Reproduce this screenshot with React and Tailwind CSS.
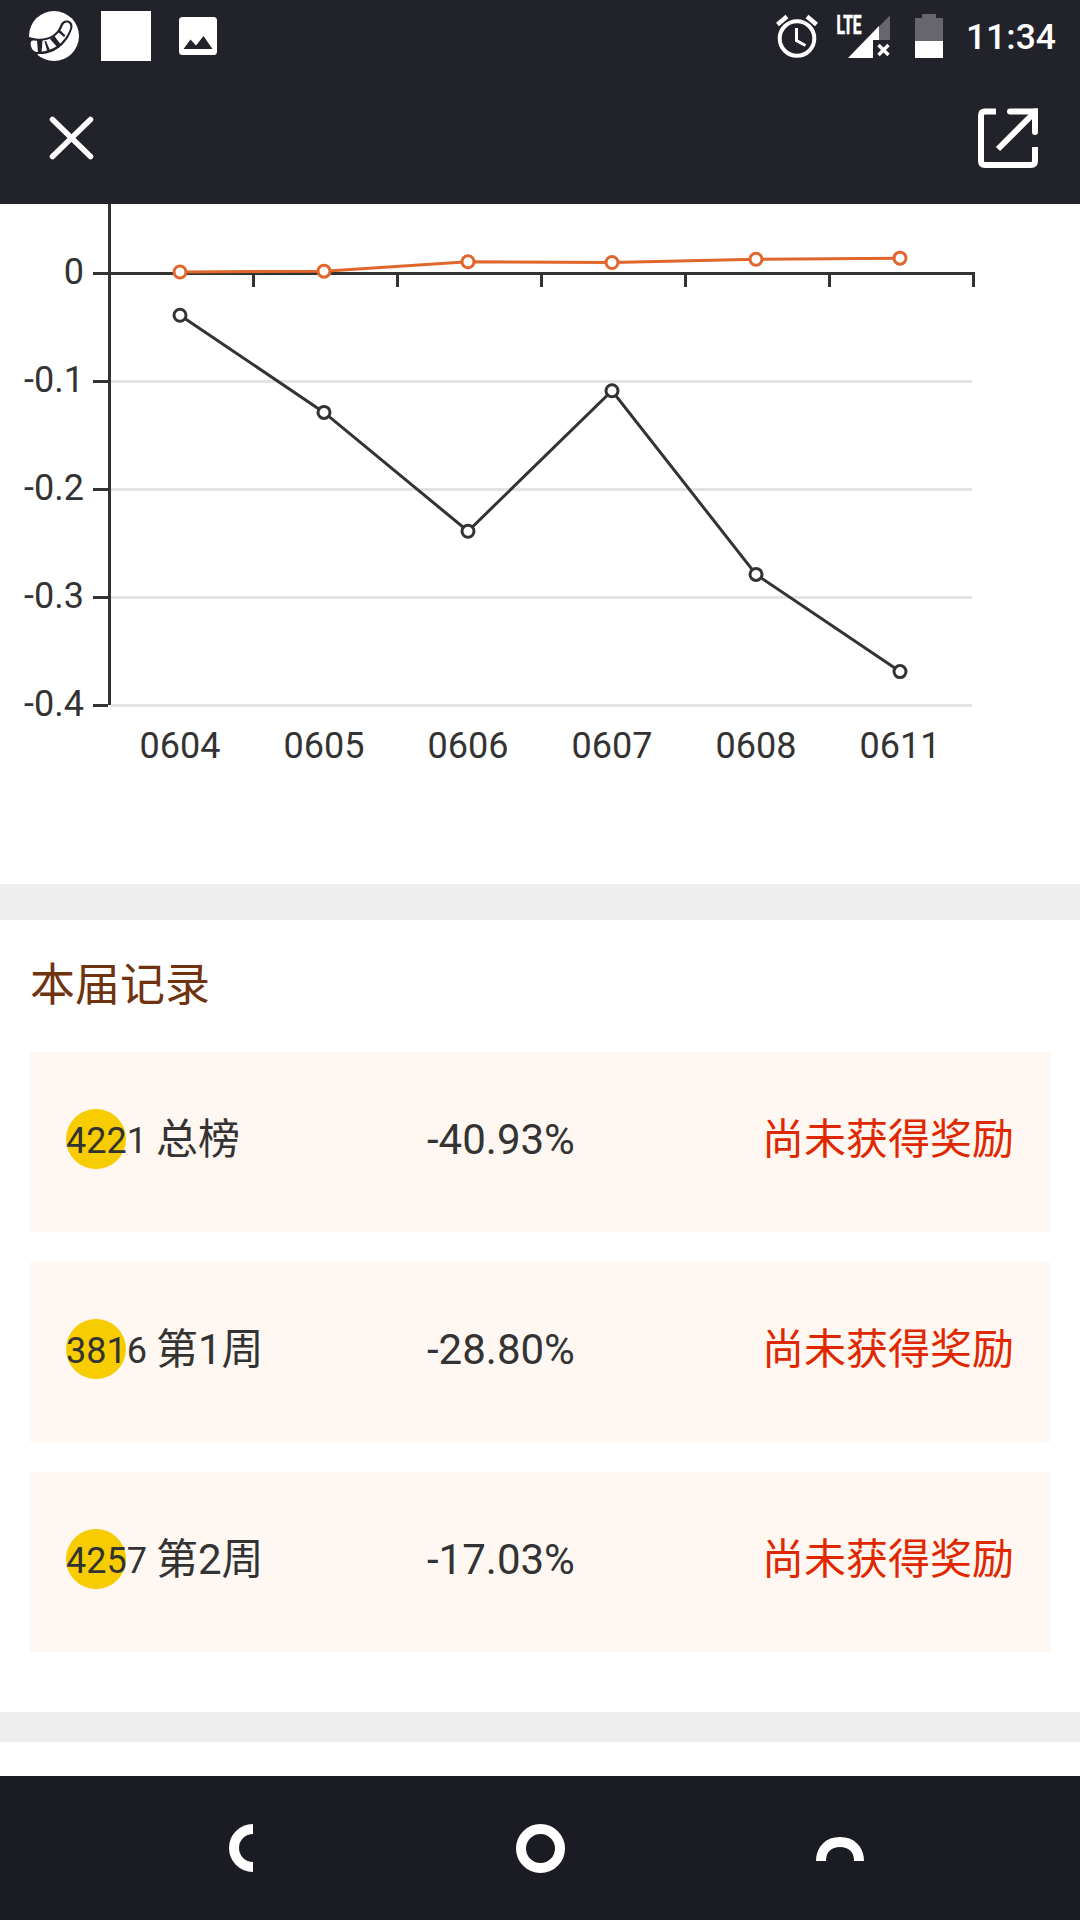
const xLabels = ['0604', '0605', '0606', '0607', '0608', '0611'];
const yLabels = ['0', '-0.1', '-0.2', '-0.3', '-0.4'];

const series = [
  { name: 'mine', color: '#333', values: [-0.04, -0.13, -0.24, -0.11, -0.28, -0.37] },
  { name: 'index', color: '#e0662c', values: [0, 0.0008, 0.0095, 0.0088, 0.0118, 0.0128] },
];

const records = [
  { rank: '4221', name: '总榜', rate: '-40.93%', award: '尚未获得奖励' },
  { rank: '3816', name: '第1周', rate: '-28.80%', award: '尚未获得奖励' },
  { rank: '4257', name: '第2周', rate: '-17.03%', award: '尚未获得奖励' },
];

const STEP_X = 144;
const STEP_Y = 108;
const pointX = (i) => 180 + i * STEP_X;
const pointY = (v) => 68 - v * 10 * STEP_Y;

function StatusBar() {
  return (
    <div className="flex h-[72px] items-center pl-[29px] pr-6">
      <svg width="50" height="50" viewBox="0 0 50 50">
        <circle cx="25" cy="25" r="25" fill="#fff" />
        <path d="M0 26 C16 31 27 25 31 15 C34 6 46 9 43 18 C37 36 22 44 9 43 L7 45 L-1 36 Z" fill="#22222b" />
        <path d="M2 35 C1 31 2 29 5 29.500 C20 31 30 25 33.500 15 C36 9 43 11 41 18 C36 32 24 40 10 41 C5 41 3 39 2 35 Z" fill="#fff" />
        <path d="M8 29 L13.500 29 L12.500 42 L9 42 Z M17 30 L21.500 40.500 L18.500 41 L15.500 30 Z M21 28 L25.500 25 L32 34 L29 37 Z M29 21 L31 19 L36.500 24.500 L35 26 Z" fill="#22222b" />
      </svg>
      <div className="ml-[22px] size-[50px] bg-white" />
      <svg className="ml-7" width="38" height="38" viewBox="0 0 38 38">
        <rect width="38" height="38" rx="3.500" fill="#fff" />
        <path d="M4.500 32 L11.500 22.500 L17 28.500 L24.500 19 L33.500 32 Z" fill="#22222b" />
      </svg>

      <svg className="ml-auto" width="42" height="44" viewBox="0 0 42 44" fill="none" stroke="#fff">
        <circle cx="21" cy="24.500" r="17.300" strokeWidth="4" />
        <path d="M20.500 14 V26.500 L29.500 31.500" strokeWidth="3" />
        <path d="M1.500 10.500 L11 2.500 M40.500 10.500 L31 2.500" strokeWidth="4.500" />
      </svg>
      <svg className="ml-[19px] overflow-visible" width="54" height="44" viewBox="0 0 54 44">
        <text x="-0.500" y="19.500" textLength="25" lengthAdjust="spacingAndGlyphs" className="font-['Roboto'] text-[26px] font-bold" fill="#fff" stroke="#fff" strokeWidth="0.700">LTE</text>
        <path d="M53 1.500 V26 H42 V12.500 Z" fill="#66666c" />
        <path d="M42 12 V26 H36 V44 H11 Z" fill="#fff" />
        <path d="M41.500 31 L51.500 41 M51.500 31 L41.500 41" stroke="#fff" strokeWidth="3.400" />
      </svg>
      <svg className="ml-6" width="28" height="44" viewBox="0 0 28 44">
        <path d="M7 0 H21 V4 H28 V27 H0 V4 H7 Z" fill="#66666c" />
        <path d="M0 27 H28 V44 H0 Z" fill="#fff" />
      </svg>
      <span className="ml-[23px] mt-[3px] text-[35.5px] font-medium leading-none text-white">11:34</span>
    </div>
  );
}

function TitleBar() {
  return (
    <div className="flex h-33 items-center justify-between pl-[49px] pr-[41px]">
      <svg width="45" height="44" viewBox="0 0 45 44" stroke="#fff" strokeWidth="5.500" strokeLinecap="round">
        <path d="M3.500 3.500 L41.500 40.500 M41.500 3.500 L3.500 40.500" />
      </svg>
      <svg width="62" height="62" viewBox="0 0 62 62" fill="none" stroke="#fff" strokeWidth="6">
        <path d="M19 4.500 H8 Q4 4.500 4 8.500 V54 Q4 58 8 58 H54 Q58 58 58 54 V40" />
        <path d="M33 4.500 H58 V25" strokeLinecap="round" />
        <path d="M56 1.500 H61 V8 Z" fill="#fff" stroke="none" />
        <path d="M21 42 L57 6" />
      </svg>
    </div>
  );
}

function TrendChart() {
  return (
    <svg className="block" width="1080" height="680" viewBox="0 0 1080 680">
      {/* grid and y axis */}
      {yLabels.map((label, i) => (
        <g key={label}>
          {i > 0 && <path d={`M111 ${69.5 + i * STEP_Y} H972`} stroke="#e3e3e3" strokeWidth="3" />}
          <path d={`M93 ${69.5 + i * STEP_Y} H108`} stroke="#333" strokeWidth="3" />
          <text x="84" y={79.5 + i * STEP_Y} textAnchor="end" className="text-[36px]" fill="#333">{label}</text>
        </g>
      ))}
      <path d="M109.500 0 V501" stroke="#333" strokeWidth="3" />

      {/* x axis */}
      <path d="M108 69.500 H975" stroke="#333" strokeWidth="3" />
      {xLabels.map((label, i) => (
        <g key={label}>
          <path d={`M${253.5 + i * STEP_X} 69 V83`} stroke="#333" strokeWidth="3" />
          <text x={pointX(i)} y="553.500" textAnchor="middle" className="text-[36px]" fill="#333">{label}</text>
        </g>
      ))}

      {series.map((s) => (
        <g key={s.name} stroke={s.color} strokeWidth="3">
          <polyline points={s.values.map((v, i) => `${pointX(i)},${pointY(v)}`).join(' ')} fill="none" />
          {s.values.map((v, i) => (
            <circle key={i} cx={pointX(i)} cy={pointY(v)} r="6" fill="#fff" />
          ))}
        </g>
      ))}
    </svg>
  );
}

function RecordRow({ record }) {
  return (
    <li className="flex h-45 items-start bg-[#fff7f1] px-9 pt-[57px] text-[42px] leading-[62px] text-[#333]">
      <div className="flex h-[60px] w-[361px] items-start">
        <span className="size-[60px] rounded-full bg-[#f7cc00] text-[36px] leading-[65px]">{record.rank}</span>
        <span className="ml-[30px]">{record.name}</span>
      </div>
      <span>{record.rate}</span>
      <span className="ml-auto text-[#e02800]">{record.award}</span>
    </li>
  );
}

function NavBar() {
  return (
    <nav className="flex h-36 items-center bg-[#1b1b23]">
      <svg className="ml-[229px]" width="24" height="48" viewBox="0 0 24 48" fill="none" stroke="#fff" strokeWidth="10">
        <circle cx="24" cy="24" r="19" />
      </svg>
      <svg className="ml-[263px]" width="49" height="49" viewBox="0 0 49 49" fill="none" stroke="#fff" strokeWidth="10">
        <circle cx="24.500" cy="24.500" r="19.500" />
      </svg>
      <svg className="ml-[251px] mt-px" width="48" height="24" viewBox="0 0 48 24" fill="none" stroke="#fff" strokeWidth="10">
        <path d="M5 24 C5 12 13 5 24 5 C35 5 43 12 43 24" />
      </svg>
    </nav>
  );
}

export default function App() {
  return (
    <div className="flex h-[1920px] w-[1080px] flex-col overflow-hidden bg-white font-['Roboto','Noto_Sans_CJK_SC',sans-serif]">
      <header className="h-51 bg-[#22222b]">
        <StatusBar />
        <TitleBar />
      </header>

      <main className="flex flex-1 flex-col">
        <TrendChart />
        <div className="h-9 bg-[#eee]" />
        <section className="px-7.5 pb-15">
          <h2 className="flex h-33 items-center text-[45px] text-[#70330f]">本届记录</h2>
          <ul className="flex flex-col gap-7.5">
            {records.map((record) => (
              <RecordRow key={record.rank} record={record} />
            ))}
          </ul>
        </section>
        <div className="h-7.5 bg-[#eee]" />
      </main>

      <NavBar />
    </div>
  );
}
